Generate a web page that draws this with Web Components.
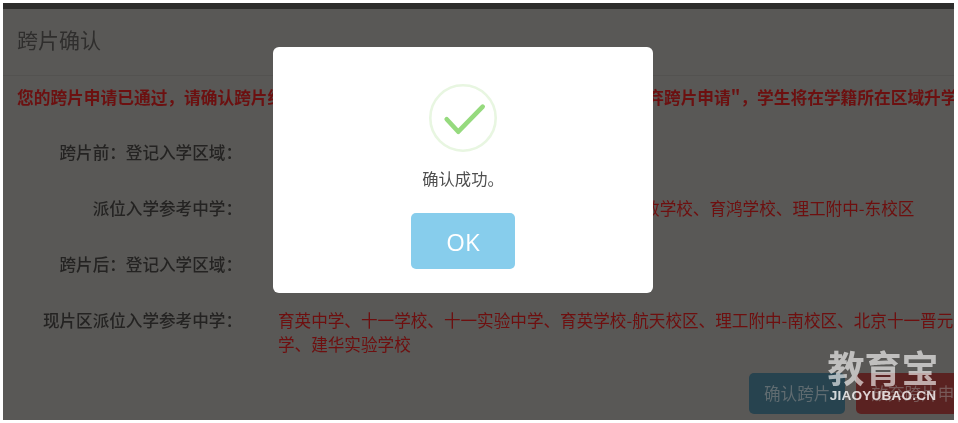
<!DOCTYPE html>
<html lang="zh">
<head>
<meta charset="utf-8">
<title>跨片确认</title>
<style>
  html, body { margin: 0; padding: 0; background: #fff; }
  body { font-family: "Noto Sans CJK SC", "Liberation Sans", sans-serif; }
</style>
</head>
<body>
<transfer-page>
  <span slot="strip">您的跨片申请已通过，请确认跨片结果，如放弃请点击放弃跨片申请，确认后不可更改。</span>
  <span slot="title">跨片确认</span>
  <span slot="notice">您的跨片申请已通过，请确认跨片结果，确认请点击"确认跨片"，如需放弃请点击"放弃跨片申请"，学生将在学籍所在区域升学。</span>

  <info-row label="跨片前：登记入学区域："></info-row>
  <info-row label="派位入学参考中学：">育英中学、十一学校、首师大附中、育英学校、育敏学校、育鸿学校、理工附中-东校区</info-row>
  <info-row label="跨片后：登记入学区域："></info-row>
  <info-row label="现片区派位入学参考中学：">育英中学、十一学校、十一实验中学、育英学校-航天校区、理工附中-南校区、北京十一晋元中学、建华实验学校</info-row>

  <dim-button slot="actions" tone="blue">确认跨片</dim-button>
  <dim-button slot="actions" tone="red">放弃跨片申请</dim-button>

  <success-modal slot="over" message="确认成功。" action="OK"></success-modal>
  <brand-mark slot="over"></brand-mark>
</transfer-page>

<script>
class TransferPage extends HTMLElement {
  constructor() {
    super();
    this.attachShadow({mode: 'open'}).innerHTML = `
    <style>
      :host {
        display: block;
        box-sizing: border-box;
        width: 958px;
        height: 423px;
        padding: 3px 4px 3px 3px;
        background: #fff;
      }
      .frame {
        position: relative;
        height: 100%;
        overflow: hidden;
        display: flex;
        flex-direction: column;
        background: #595856;
        font-size: 16.6px;
        line-height: 24px;
        filter: blur(.35px);
      }
      .strip {
        flex: none;
        height: 5.5px;
        background: #2e2d2c;
        color: #4c1a1a;
        font-weight: 700;
        overflow: hidden;
        white-space: nowrap;
        display: flex;
        align-items: flex-end;
        padding-left: 268px;
      }
      .strip span { display: block; margin-bottom: 4px; }
      header {
        flex: none;
        height: 67.5px;
        box-sizing: border-box;
        border-bottom: 1px solid #535250;
        padding: 0 0 5px 14px;
        display: flex;
        align-items: center;
        font-size: 21px;
        color: #2f2e2d;
      }
      .notice {
        margin-top: 9px;
        padding-left: 14px;
        white-space: nowrap;
        font-size: 16.72px;
        font-weight: 700;
        color: #6c1010;
      }
      .rows {
        margin-top: 31px;
        display: flex;
        flex-direction: column;
        gap: 32px;
      }
      .actions {
        margin-top: 17px;
        padding-left: 746px;
        display: flex;
        gap: 11px;
      }
    </style>
    <div class="frame">
      <div class="strip"><span><slot name="strip"></slot></span></div>
      <header><slot name="title"></slot></header>
      <div class="notice"><slot name="notice"></slot></div>
      <div class="rows"><slot></slot></div>
      <div class="actions"><slot name="actions"></slot></div>
      <slot name="over"></slot>
    </div>`;
  }
}

class InfoRow extends HTMLElement {
  constructor() {
    super();
    const label = this.getAttribute('label') || '';
    this.attachShadow({mode: 'open'}).innerHTML = `
    <style>
      :host { display: flex; min-height: 24px; gap: 36px; }
      .label {
        flex: none;
        width: 239px;
        text-align: right;
        font-weight: 500;
        color: #242322;
      }
      .value {
        flex: none;
        width: 700px;
        color: #6e0f0f;
      }
    </style>
    <div class="label">${label}</div>
    <div class="value"><slot></slot></div>`;
  }
}

class DimButton extends HTMLElement {
  constructor() {
    super();
    const bg = this.getAttribute('tone') === 'red' ? '#5a2221' : '#27434f';
    const fg = this.getAttribute('tone') === 'red' ? '#785a59' : '#5f6b70';
    this.attachShadow({mode: 'open'}).innerHTML = `
    <style>
      :host {
        display: block;
        flex: none;
        box-sizing: border-box;
        height: 41px;
        line-height: 41px;
        padding: 0 15px;
        border-radius: 5px;
        white-space: nowrap;
        background: ${bg};
        color: ${fg};
      }
    </style>
    <slot></slot>`;
  }
}

class SuccessModal extends HTMLElement {
  constructor() {
    super();
    const message = this.getAttribute('message') || '';
    const action = this.getAttribute('action') || 'OK';
    this.attachShadow({mode: 'open'}).innerHTML = `
    <style>
      :host {
        position: absolute;
        left: 270px;
        top: 44px;
        width: 380px;
        height: 246px;
        box-sizing: border-box;
        padding-top: 37px;
        display: flex;
        flex-direction: column;
        align-items: center;
        background: #fff;
        border-radius: 6px;
      }
      svg { display: block; width: 68px; height: 68px; flex: none; }
      p {
        margin: 14px 0 0;
        font-size: 16.3px;
        line-height: 24px;
        color: #4f4f4f;
      }
      button {
        margin-top: 23px;
        width: 104px;
        height: 56px;
        padding: 0;
        border: 0;
        border-radius: 5px;
        background: #87cdec;
        color: #fff;
        font: 500 24px "Open Sans", "Noto Sans", sans-serif;
      }
    </style>
    <svg viewBox="0 0 68 68" aria-hidden="true">
      <circle cx="34" cy="34" r="32.7" fill="#fff" stroke="#e8f6e1" stroke-width="2.6"/>
      <path d="M17.7 35.3 29.3 47.7 53.7 22.7" fill="none" stroke="#96da7e" stroke-width="4.6" stroke-linecap="round" stroke-linejoin="round"/>
    </svg>
    <p>${message}</p>
    <button type="button">${action}</button>`;
  }
}

class BrandMark extends HTMLElement {
  constructor() {
    super();
    this.attachShadow({mode: 'open'}).innerHTML = `
    <style>
      :host {
        position: absolute;
        left: 824px;
        top: 344px;
        width: 112px;
        display: flex;
        flex-direction: column;
        align-items: center;
        color: rgba(255,255,255,.62);
      }
      .cn {
        font: 700 37px/41px "Noto Sans CJK SC", sans-serif;
        white-space: nowrap;
      }
      .en {
        margin-top: 1px;
        font: 700 13.6px/14px "Liberation Sans", sans-serif;
        letter-spacing: .2px;
        color: rgba(255,255,255,.8);
        white-space: nowrap;
      }
    </style>
    <div class="cn">教育宝</div>
    <div class="en">JIAOYUBAO.CN</div>`;
  }
}

customElements.define('transfer-page', TransferPage);
customElements.define('info-row', InfoRow);
customElements.define('dim-button', DimButton);
customElements.define('success-modal', SuccessModal);
customElements.define('brand-mark', BrandMark);
</script>
</body>
</html>
